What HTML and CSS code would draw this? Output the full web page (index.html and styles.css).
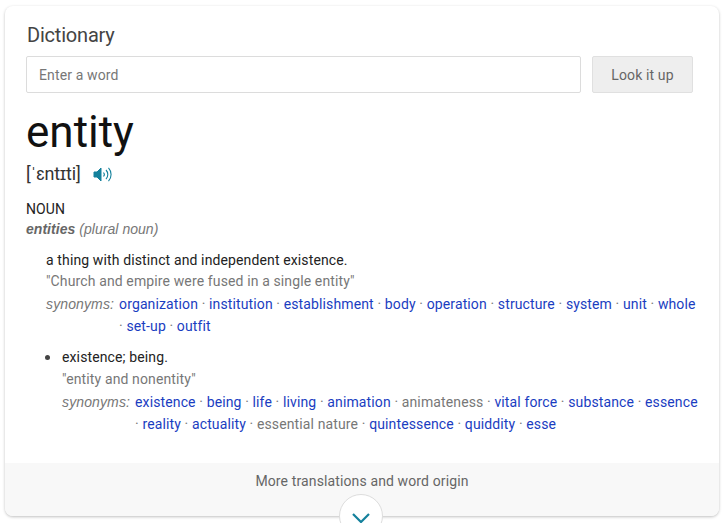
FILE: index.html
```html
<!DOCTYPE html>
<html lang="en">
<head>
    <meta charset="UTF-8">
    <meta name="viewport" content="width=device-width, initial-scale=1.0">
    <title>Dictionary</title>
    <link rel="stylesheet" href="styles.css">
</head>
<body>

<div class="card">
    <div class="card-body">
        <div class="card-title">Dictionary</div>
        <div class="search-row">
            <input class="search-input" type="text" placeholder="Enter a word">
            <button class="search-btn">Look it up</button>
        </div>

        <div class="headword">entity</div>
        <div class="phonetic">
            <span>[ˈɛntɪti]</span>
            <svg class="speaker" width="20" height="17" viewBox="0 0 20 17">
                <path d="M1 6h3L8 2v13L4 11H1z" fill="#14819c" stroke="#14819c" stroke-width="1" stroke-linejoin="round"/>
                <path d="M10.5 6.5a3 3 0 0 1 0 4M13 4a6.5 6.5 0 0 1 0 9M15.5 1.8a10 10 0 0 1 0 13.4" fill="none" stroke="#14819c" stroke-width="1.1"/>
            </svg>
        </div>

        <div class="pos">NOUN</div>
        <div class="plural"><b>entities</b> (plural noun)</div>

        <div class="sense">
            <div class="def">a thing with distinct and independent existence.</div>
            <div class="quote">"Church and empire were fused in a single entity"</div>
            <div class="syn-row">
                <span class="syn-label">synonyms:</span>
                <div class="syn-list">
                    <a>organization</a> ·&nbsp;<a>institution</a> ·&nbsp;<a>establishment</a> ·&nbsp;<a>body</a> ·&nbsp;<a>operation</a> ·&nbsp;<a>structure</a> ·&nbsp;<a>system</a> ·&nbsp;<a>unit</a> ·&nbsp;<a>whole</a> ·&nbsp;<a>set-up</a> ·&nbsp;<a>outfit</a>
                </div>
            </div>
        </div>

        <ul class="sense-list">
            <li>
                <div class="def">existence; being.</div>
                <div class="quote">"entity and nonentity"</div>
                <div class="syn-row">
                    <span class="syn-label">synonyms:</span>
                    <div class="syn-list">
                        <a>existence</a> ·&nbsp;<a>being</a> ·&nbsp;<a>life</a> ·&nbsp;<a>living</a> ·&nbsp;<a>animation</a> ·&nbsp;animateness ·&nbsp;<a>vital force</a> ·&nbsp;<a>substance</a> ·&nbsp;<a>essence</a> ·&nbsp;<a>reality</a> ·&nbsp;<a>actuality</a> ·&nbsp;essential nature ·&nbsp;<a>quintessence</a> ·&nbsp;<a>quiddity</a> ·&nbsp;<a>esse</a>
                    </div>
                </div>
            </li>
        </ul>
    </div>

    <div class="card-footer">
        More translations and word origin
        <div class="more-btn">
            <svg width="20" height="12" viewBox="0 0 20 12">
                <path d="M2 2l8 8 8-8" fill="none" stroke="#14819c" stroke-width="2.2"/>
            </svg>
        </div>
    </div>
</div>

</body>
</html>
```

FILE: styles.css
```css
html, body { height: 100%; }
body {
    background-color: #fff;
    color: #222;
    font-family: 'Roboto', sans-serif;
    font-size: 14px;
    letter-spacing: 0.125px;
    margin: 0;
    padding: 6px 7px 0 5px;
    box-sizing: border-box;
    overflow: hidden;
}
.card {
    height: 510px;
    box-sizing: border-box;
    background-color: #fff;
    border-radius: 8px;
    box-shadow: 0 1px 3px rgba(0, 0, 0, 0.25);
    display: flex;
    flex-direction: column;
}
.card-body {
    flex: 1;
    padding: 17px 21px 0 21px;
}
.card-title {
    font-size: 20px;
    line-height: 24px;
    letter-spacing: -0.2px;
    color: #444;
    margin-bottom: 9px;
    padding-left: 1px;
}
.search-row {
    display: flex;
    gap: 11px;
    margin-right: 5px;
}
.search-input {
    flex: 1;
    height: 37px;
    box-sizing: border-box;
    border: 1px solid #dcdcdc;
    border-radius: 2px;
    padding: 0 12px;
    font-family: inherit;
    font-size: 14px;
    letter-spacing: inherit;
    min-width: 0;
}
.search-input::placeholder { color: #777; opacity: 1; }
.search-btn {
    width: 101px;
    height: 37px;
    background-color: #eee;
    border: 1px solid #e0e0e0;
    border-radius: 2px;
    color: #666;
    font-family: inherit;
    font-size: 14px;
    letter-spacing: inherit;
    padding: 0;
}
.headword {
    font-size: 44px;
    line-height: 52px;
    letter-spacing: 0;
    color: #111;
    margin-top: 13px;
}
.phonetic {
    display: flex;
    align-items: center;
    gap: 12px;
    font-size: 18px;
    line-height: 24px;
    letter-spacing: -0.2px;
    color: #333;
    margin-top: 4px;
    margin-bottom: 13px;
}
.pos {
    line-height: 20px;
    color: #222;
}
.plural {
    line-height: 20px;
    font-family: 'Liberation Sans', sans-serif;
    font-style: italic;
    letter-spacing: 0.04px;
    color: #777;
}
.plural b { color: #666; }
.sense { margin: 11px 0 0 20px; }
.def { line-height: 20px; color: #222; }
.quote { line-height: 22px; color: #777; }
.syn-row {
    display: flex;
    gap: 5px;
    line-height: 22px;
    margin-top: 1px;
    color: #777;
}
.syn-label {
    font-family: 'Liberation Sans', sans-serif;
    font-style: italic;
    white-space: nowrap;
}
.syn-list { flex: 1; }
.syn-list a { color: #1a3dc1; }
.sense-list {
    margin: 9px 0 0 0;
    padding: 0 0 0 36px;
}
.sense-list li::marker { color: #444; font-size: 17px; }
.sense-list .def { margin-bottom: 1px; }
.card-footer {
    position: relative;
    height: 53px;
    box-sizing: border-box;
    padding-top: 9px;
    line-height: 18px;
    background-color: #f8f8f8;
    border-radius: 0 0 8px 8px;
    text-align: center;
    color: #666;
}
.more-btn {
    position: absolute;
    left: 50%;
    top: 31px;
    width: 44px;
    height: 44px;
    margin-left: -23px;
    box-sizing: border-box;
    background-color: #fff;
    border: 1px solid #ddd;
    border-radius: 50%;
    padding: 15px 0 0 11px;
    text-align: left;
}
```
